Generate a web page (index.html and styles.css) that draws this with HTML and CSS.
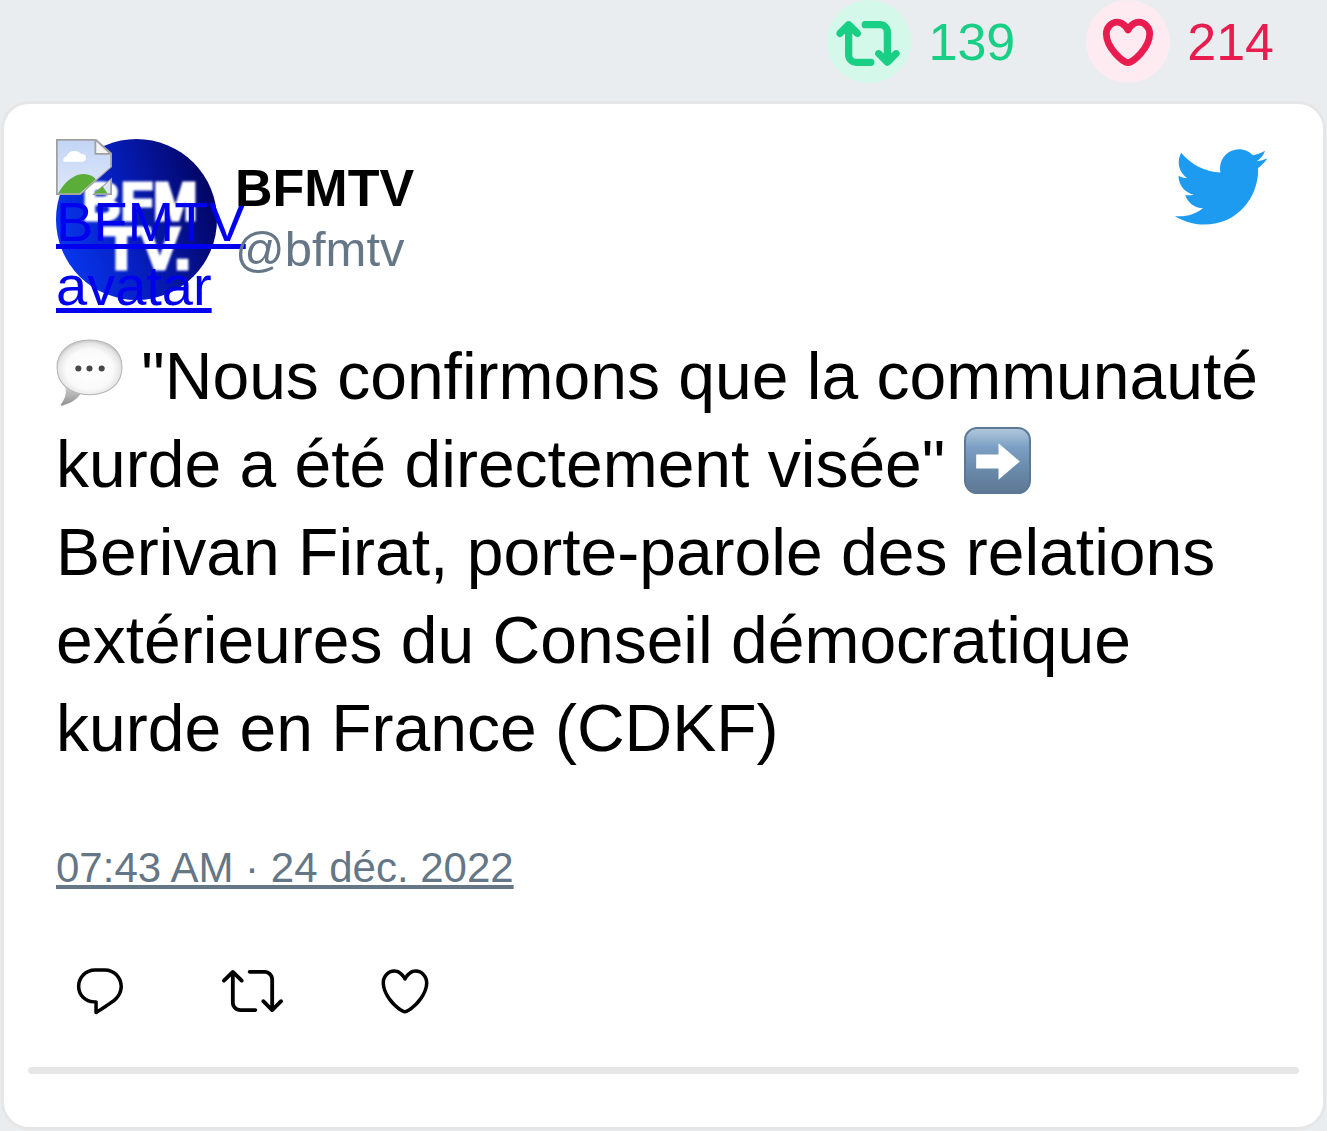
FILE: index.html
```html
<!DOCTYPE html>
<html lang="fr">
<head>
<meta charset="utf-8">
<meta name="viewport" content="width=device-width, initial-scale=1">
<title>BFMTV</title>
<link rel="stylesheet" href="styles.css">
</head>
<body>
<svg class="defs" width="0" height="0" aria-hidden="true">
  <symbol id="retweet" viewBox="0 0 24 24"><path d="M23.77 15.67c-.292-.293-.767-.293-1.06 0l-2.22 2.22V7.65c0-2.068-1.683-3.75-3.75-3.75h-5.85c-.414 0-.75.336-.75.75s.336.75.75.75h5.85c1.24 0 2.25 1.01 2.25 2.25v10.24l-2.22-2.22c-.293-.293-.768-.293-1.06 0s-.294.768 0 1.06l3.5 3.5c.145.147.337.22.53.22s.383-.072.53-.22l3.5-3.5c.294-.292.294-.767 0-1.06zm-10.66 3.28H7.26c-1.24 0-2.25-1.01-2.25-2.25V6.46l2.22 2.22c.148.147.34.22.532.22s.384-.073.53-.22c.293-.293.293-.768 0-1.06l-3.5-3.5c-.293-.294-.768-.294-1.06 0l-3.5 3.5c-.294.292-.294.767 0 1.06s.767.293 1.06 0l2.22-2.22V16.7c0 2.068 1.683 3.75 3.75 3.75h5.85c.414 0 .75-.336.75-.75s-.337-.75-.75-.75z"/></symbol>
  <symbol id="heart" viewBox="0 0 24 24"><path d="M12 21.638h-.014C9.403 21.59 1.95 14.856 1.95 8.478c0-3.064 2.525-5.754 5.403-5.754 2.29 0 3.83 1.58 4.646 2.73.814-1.148 2.354-2.73 4.645-2.73 2.88 0 5.404 2.69 5.404 5.755 0 6.376-7.454 13.11-10.037 13.157H12zM7.354 4.225c-2.08 0-3.903 1.988-3.903 4.255 0 5.74 7.034 11.596 8.55 11.658 1.518-.062 8.55-5.917 8.55-11.658 0-2.267-1.823-4.255-3.903-4.255-2.528 0-3.94 2.936-3.952 2.965-.23.562-1.156.562-1.387 0-.014-.03-1.425-2.965-3.954-2.965z"/></symbol>
</svg>

<div class="stats">
  <div class="stat stat-retweet">
    <span class="badge"><svg class="icon icon-retweet" viewBox="0 0 24 24"><use href="#retweet"/></svg></span>
    <span>139</span>
  </div>
  <div class="stat stat-like">
    <span class="badge"><svg class="icon" viewBox="0 0 24 24"><use href="#heart"/></svg></span>
    <span>214</span>
  </div>
</div>

<article class="card">
  <header class="header">
    <a class="avatar" href="#">
      <svg class="avatar-picture" viewBox="0 0 161 161" aria-hidden="true">
        <defs>
          <linearGradient id="disc" x1="0" y1=".65" x2="1" y2=".35">
            <stop offset="0" stop-color="#0838f0"/>
            <stop offset=".4" stop-color="#0620c4"/>
            <stop offset=".75" stop-color="#040f8a"/>
            <stop offset="1" stop-color="#020460"/>
          </linearGradient>
          <filter id="soft"><feGaussianBlur stdDeviation="1.3"/></filter>
        </defs>
        <circle cx="80.500" cy="80.500" r="80.500" fill="url(#disc)"/>
        <g class="logo" filter="url(#soft)">
          <text class="logo-top" x="84" y="81" text-anchor="middle">BFM</text>
          <text class="logo-bottom" x="91" y="130" text-anchor="middle">TV.</text>
        </g>
      </svg>
      <span class="avatar-label">
        <svg class="broken" viewBox="0 0 16 16" aria-hidden="true">
          <defs><linearGradient id="sky" x1="0" y1="0" x2="0" y2="1"><stop offset="0" stop-color="#c3d5f5"/><stop offset="1" stop-color="#dde7fa"/></linearGradient></defs>
          <path fill="#a0a0a0" d="M0 0h11.500L16 4v4L7 16H0z"/>
          <path fill="url(#sky)" d="M.5.500H11V4.500h4.500V8L7 15.500H.5z"/>
          <path fill="#f4f4f4" d="M11.500.700V4H15z"/>
          <path fill="#fff" d="M2.200 6.500a1.100 1.100 0 0 1 .8-1.600a2.500 2.500 0 0 1 4.200-.6a1.100 1.100 0 0 1 .5 2.200z"/>
          <path fill="#5aad38" d="M.6 15.500C3 11.500 5.500 10 8 10c1.500 0 2.600.6 3.400 1.500L6.800 15.500z"/>
          <path fill="#a0a0a0" d="M16 11v5h-5.700z"/>
          <path fill="#dde7fa" d="M15.500 11.800v3.700h-4z"/>
          <path fill="#5aad38" d="M11 15.500l2.300-2 1.400 2z"/>
        </svg>
        BFMTV avatar
      </span>
    </a>
    <div class="author">
      <strong class="name">BFMTV</strong>
      <span class="handle">@bfmtv</span>
    </div>
    <svg class="bird" viewBox="0 0 24 24" aria-hidden="true"><path d="M23.643 4.937c-.835.37-1.732.62-2.675.733.962-.576 1.7-1.49 2.048-2.578-.9.534-1.897.922-2.958 1.13-.85-.904-2.06-1.47-3.4-1.47-2.572 0-4.658 2.086-4.658 4.66 0 .364.042.718.12 1.06-3.873-.195-7.304-2.05-9.602-4.868-.4.69-.63 1.49-.63 2.342 0 1.616.823 3.043 2.072 3.878-.764-.025-1.482-.234-2.11-.583v.06c0 2.257 1.605 4.14 3.737 4.568-.392.106-.803.162-1.227.162-.3 0-.593-.028-.877-.082.593 1.85 2.313 3.198 4.352 3.234-1.595 1.25-3.604 1.995-5.786 1.995-.376 0-.747-.022-1.112-.065 2.062 1.323 4.51 2.093 7.14 2.093 8.57 0 13.255-7.098 13.255-13.254 0-.2-.005-.402-.014-.602.91-.658 1.7-1.477 2.323-2.41z"/></svg>
  </header>

  <p class="text"><svg class="emoji" viewBox="0 0 66 66" role="img" aria-label="Bulle">
      <defs>
        <radialGradient id="bubble" cx=".5" cy=".54" r=".56"><stop offset="0" stop-color="#fff"/><stop offset=".65" stop-color="#fafafa"/><stop offset=".85" stop-color="#e6e6e6"/><stop offset="1" stop-color="#bcbcbc"/></radialGradient>
        <linearGradient id="tail" x1="0" y1="0" x2="0" y2="1"><stop offset="0" stop-color="#d0d0d0"/><stop offset="1" stop-color="#929292"/></linearGradient>
      </defs>
      <path fill="url(#tail)" d="M9 46c2 9-1 14-4 18-1 2 1 2 3 1 8-2 13-6 17-12z"/>
      <path fill="url(#bubble)" stroke="#b4b4b4" d="M33 1C53 1 65 12 65 28S52 55 33 55 1 44 1 28 14 1 33 1z"/>
      <g fill="#484848"><circle cx="22" cy="29" r="3"/><circle cx="33" cy="29" r="3"/><circle cx="45" cy="29" r="3"/></g>
    </svg> "Nous confirmons que la communauté kurde a été directement visée" <svg class="emoji" viewBox="0 0 66 66" role="img" aria-label="Flèche droite">
      <defs>
        <linearGradient id="tile" x1="0" y1="0" x2="0" y2="1"><stop offset="0" stop-color="#b3c9dd"/><stop offset=".3" stop-color="#7b9fc3"/><stop offset=".6" stop-color="#6b8cae"/><stop offset="1" stop-color="#5d7892"/></linearGradient>
      </defs>
      <rect x="1" y="1" width="64" height="64" rx="12" fill="url(#tile)" stroke="#5b7997" stroke-width="2"/>
      <path fill="#fff" d="M12 27h22V16l21 18-21 18V41H12z"/>
    </svg> Berivan Firat, porte-parole des relations extérieures du Conseil démocratique kurde en France (CDKF)</p>

  <a class="date" href="#">07:43 AM · 24 déc. 2022</a>

  <div class="actions">
    <button class="action" type="button" aria-label="Répondre"><svg class="icon" viewBox="0 0 24 24"><path d="M14.046 2.242l-4.148-.01h-.002c-4.374 0-7.8 3.427-7.8 7.802 0 4.098 3.186 7.206 7.465 7.37v3.828c0 .108.044.286.12.403.142.225.384.347.632.347.138 0 .277-.038.402-.118.264-.168 6.473-4.14 8.088-5.506 1.902-1.61 3.04-3.97 3.043-6.312v-.017c-.006-4.367-3.43-7.787-7.8-7.788zm3.787 12.972c-1.134.96-4.862 3.405-6.772 4.643V16.67c0-.414-.335-.75-.75-.75h-.396c-3.66 0-6.318-2.476-6.318-5.886 0-3.534 2.768-6.302 6.3-6.302l4.147.01h.002c3.532 0 6.3 2.766 6.302 6.296-.003 1.91-.942 3.844-2.514 5.176z"/></svg></button>
    <button class="action" type="button" aria-label="Retweeter"><svg class="icon icon-retweet" viewBox="0 0 24 24"><use href="#retweet"/></svg></button>
    <button class="action" type="button" aria-label="Aimer"><svg class="icon" viewBox="0 0 24 24"><use href="#heart"/></svg></button>
  </div>

  <hr class="rule">
</article>
</body>
</html>
```
FILE: styles.css
```css
* {
  box-sizing: border-box;
}

body {
  margin: 0;
  background: #e9edf0;
  color: #000;
  font-family: "Liberation Sans", Arial, sans-serif;
}

.defs {
  display: none;
}

.stats {
  display: flex;
  justify-content: flex-end;
  gap: 71px;
  padding: 0 53px 18px;
}

.stat {
  display: flex;
  align-items: center;
  gap: 17px;
  font-size: 52px;
  line-height: 60px;
}

.badge {
  display: flex;
  align-items: center;
  justify-content: center;
  width: 84px;
  height: 83px;
  border-radius: 50%;
}

.icon {
  display: block;
  width: 56px;
  height: 56px;
  fill: currentColor;
  overflow: visible;
}

.icon-retweet {
  width: 61px;
  height: 61px;
}

symbol {
  overflow: visible;
}

.stat .icon {
  stroke: currentColor;
  stroke-width: 1.4;
}

.stat .icon-retweet {
  width: 60px;
  height: 60px;
}

.stat-retweet {
  color: #19cf86;
}

.stat-retweet .badge {
  padding: 2px 3px 0 0;
  background: #d4f9ea;
}

.stat-like {
  color: #e81c4f;
}

.stat-like .badge {
  background: #fdebf1;
}

.card {
  margin: 0 1px 1px;
  padding: 35px 24px 53px;
  border: 3px solid #e6e6e6;
  border-radius: 28px;
  background: #fff;
}

.header {
  display: flex;
  gap: 18px;
  height: 162px;
  margin: 0 30px 0 28px;
}

.avatar {
  display: grid;
  flex: none;
  width: 161px;
  color: #00e;
  font-size: 56px;
  line-height: 64px;
}

.avatar-picture,
.avatar-label {
  grid-area: 1 / 1;
}

.avatar-picture {
  width: 161px;
  height: 161px;
}

.logo {
  fill: #fff;
  stroke: #fff;
  stroke-width: 3;
  font-weight: bold;
}

.logo-top {
  font-size: 53px;
}

.logo-bottom {
  font-size: 60px;
}

.broken {
  display: block;
  width: 56px;
  height: 56px;
  margin-bottom: -5px;
}

.author {
  display: flex;
  flex: 1;
  flex-direction: column;
  padding-top: 18px;
}

.name {
  font-size: 52px;
  line-height: 62px;
}

.handle {
  color: #657786;
  font-size: 49px;
  line-height: 60px;
}

.bird {
  flex: none;
  width: 98px;
  height: 98px;
  margin-top: -1px;
  fill: #1d9bf0;
}

.text {
  margin: 31px 32px 71px 28px;
  font-size: 66px;
  line-height: 88px;
}

.emoji {
  width: 67px;
  height: 67px;
  vertical-align: -7px;
}

.date {
  display: block;
  width: fit-content;
  margin: 0 28px;
  color: #657786;
  font-size: 42px;
  line-height: 50px;
}

.actions {
  display: flex;
  align-items: center;
  gap: 94px;
  margin: 67px 44px 46px;
}

.action {
  padding: 0;
  border: 0;
  background: none;
  color: #000;
}

.rule {
  height: 7px;
  margin: 0;
  border: 0;
  border-radius: 4px;
  background: #e6e6e6;
}
```
